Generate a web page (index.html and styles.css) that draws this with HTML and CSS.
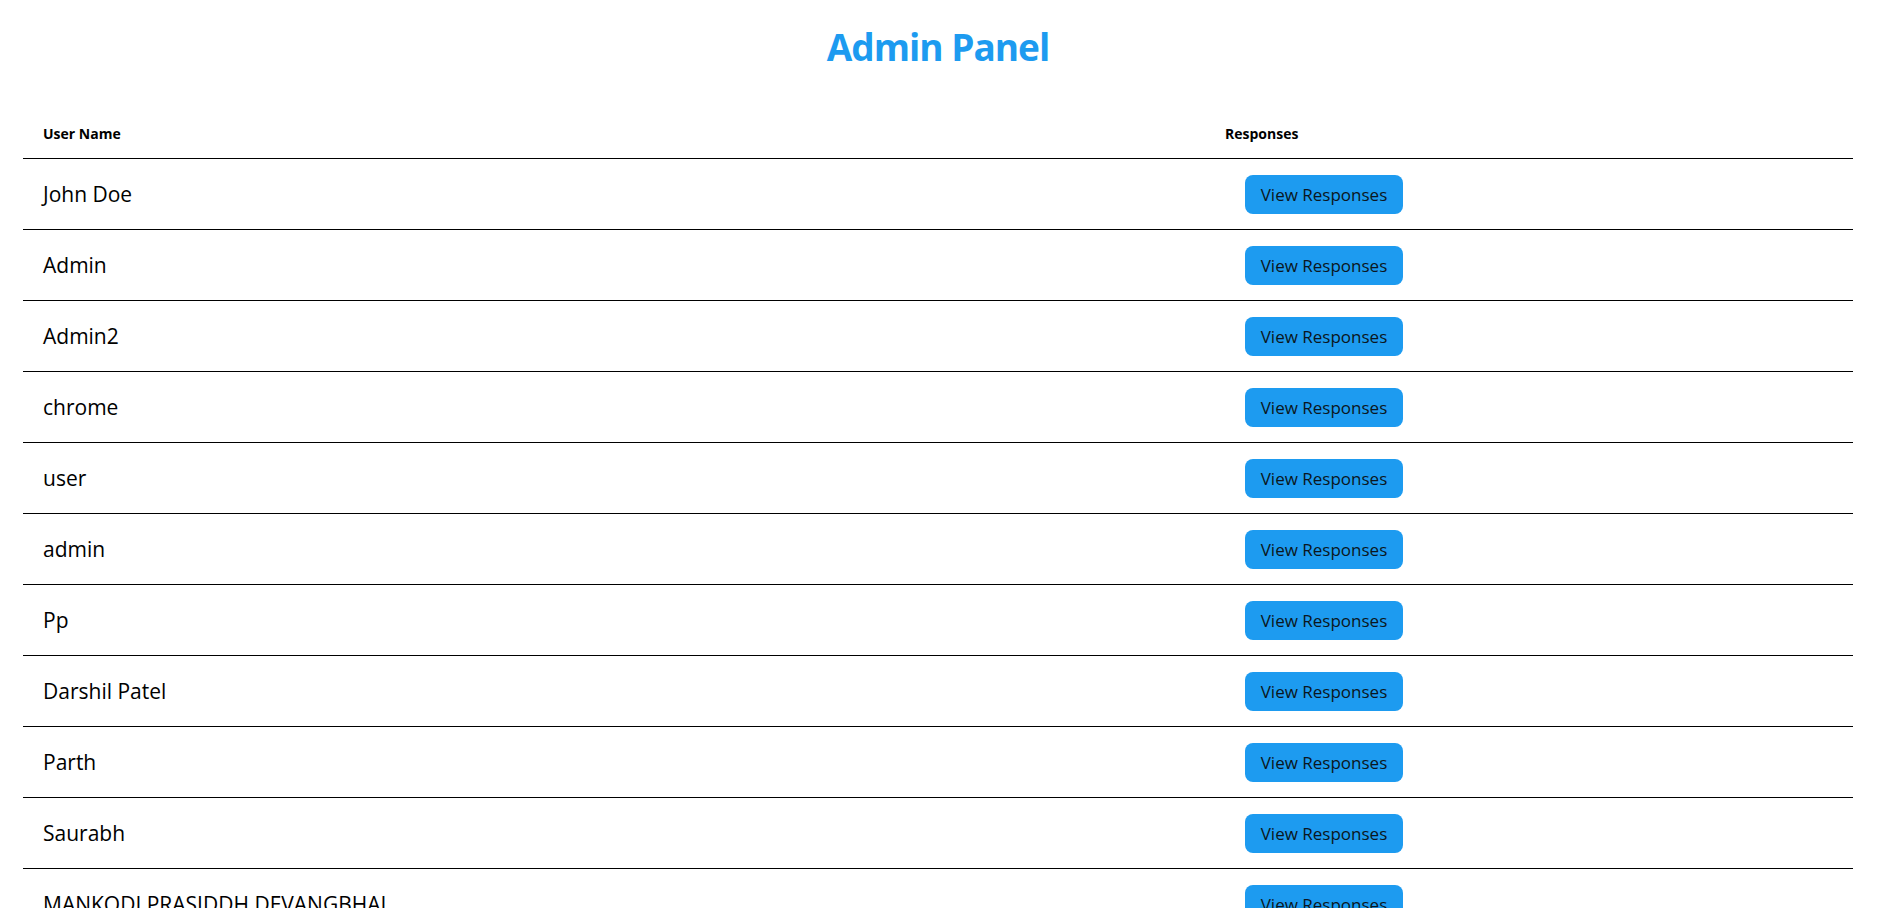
FILE: index.html
```html
<!DOCTYPE html>
<html lang="en">
<head>
<meta charset="utf-8">
<title>Admin Panel</title>
<link rel="stylesheet" href="styles.css">
</head>
<body>
<div class="page">
  <h1 class="title">Admin Panel</h1>
  <table class="users">
    <thead>
      <tr><th class="col-name">User Name</th><th class="col-resp">Responses</th></tr>
    </thead>
    <tbody>
      <tr><td>John Doe</td><td><button class="btn">View Responses</button></td></tr>
      <tr><td>Admin</td><td><button class="btn">View Responses</button></td></tr>
      <tr><td>Admin2</td><td><button class="btn">View Responses</button></td></tr>
      <tr><td>chrome</td><td><button class="btn">View Responses</button></td></tr>
      <tr><td>user</td><td><button class="btn">View Responses</button></td></tr>
      <tr><td>admin</td><td><button class="btn">View Responses</button></td></tr>
      <tr><td>Pp</td><td><button class="btn">View Responses</button></td></tr>
      <tr><td>Darshil Patel</td><td><button class="btn">View Responses</button></td></tr>
      <tr><td>Parth</td><td><button class="btn">View Responses</button></td></tr>
      <tr><td>Saurabh</td><td><button class="btn">View Responses</button></td></tr>
      <tr><td>MANKODI PRASIDDH DEVANGBHAI</td><td><button class="btn">View Responses</button></td></tr>
    </tbody>
  </table>
</div>
</body>
</html>
```
FILE: styles.css
```css
html, body {
  margin: 0;
  padding: 0;
  background: #fff;
}
body {
  font-family: "Open Sans", "Noto Sans", sans-serif;
  color: #000;
}
.page {
  padding: 0 29px 0 23px;
}
.title {
  margin: 0;
  padding-top: 22px;
  height: 108px;
  box-sizing: border-box;
  text-align: center;
  color: #1d9bf0;
  font-size: 37px;
  font-weight: 700;
  line-height: 50px;
  letter-spacing: -1px;
}
.users {
  width: 100%;
  border-collapse: collapse;
  table-layout: fixed;
}
.users th {
  text-align: left;
  font-size: 14px;
  font-weight: 700;
  height: 50px;
  padding: 0 20px;
  border-bottom: 1px solid #000;
  vertical-align: middle;
}
.users .col-name { width: 1142px; }
.users td {
  height: 70px;
  padding: 0 20px;
  font-size: 21px;
  border-bottom: 1px solid #000;
  vertical-align: middle;
}
.btn {
  margin-left: 20px;
  height: 39px;
  width: 158px;
  padding: 0;
  border: none;
  border-radius: 8px;
  background: #1d9bf0;
  color: #0b1620;
  font-family: "Open Sans", "Noto Sans", sans-serif;
  font-size: 17px;
  cursor: pointer;
}
```
